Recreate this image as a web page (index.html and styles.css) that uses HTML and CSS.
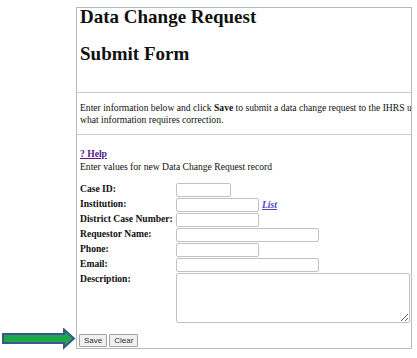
FILE: index.html
```html
<!DOCTYPE html>
<html lang="en">
<head>
  <meta charset="UTF-8">
  <title>Data Change Request</title>
  <link rel="stylesheet" href="styles.css">
</head>
<body>
  <svg class="pointer" width="80" height="22" viewBox="0 0 80 22">
    <polygon points="3,6 64,6 64,1.5 74,10.5 64,19.5 64,15 3,15" fill="#1ba84b" stroke="#3a5889" stroke-width="2" stroke-linejoin="miter"/>
  </svg>

  <div class="frame">
    <div class="content">
      <h1>Data Change Request</h1>
      <h1>Submit Form</h1>
      <hr>
      <p class="intro">Enter information below and click <b>Save</b> to submit a data change request to the IHRS unit. Please describe<br>what information requires correction.</p>
      <hr>
      <a class="help" href="#">? Help</a>
      <p class="note">Enter values for new Data Change Request record</p>

      <div class="form">
        <label>Case ID:</label>
        <div><input type="text" class="w-s"></div>
        <label>Institution:</label>
        <div><input type="text" class="w-m"> <a class="list" href="#">List</a></div>
        <label>District Case Number:</label>
        <div><input type="text" class="w-m"></div>
        <label>Requestor Name:</label>
        <div><input type="text" class="w-l"></div>
        <label>Phone:</label>
        <div><input type="text" class="w-m"></div>
        <label>Email:</label>
        <div><input type="text" class="w-l"></div>
        <label>Description:</label>
        <div><textarea></textarea></div>
      </div>

      <div class="buttons">
        <button>Save</button>
        <button>Clear</button>
      </div>
    </div>
  </div>
</body>
</html>
```

FILE: styles.css
```css
body {
  margin: 0;
  background: #fff;
  color: #111;
  font-family: "Liberation Serif", "Times New Roman", serif;
  font-size: 9.6px;
  line-height: 12px;
}

.pointer {
  position: absolute;
  left: 0;
  top: 328px;
}

.frame {
  margin: 7px 0 0 76px;
  width: 334px;
  height: 340px;
  border: 1px solid #b3bbcb;
  overflow: hidden;
}

.content {
  width: 480px;
  padding-left: 3px;
}

h1 {
  margin: 0 0 19px;
  font-size: 19px;
  line-height: 18px;
  font-weight: bold;
}

hr {
  margin: 0;
  margin-left: -3px;
  border: 0;
  border-top: 1px solid #c6cad2;
}

h1 + h1 + hr {
  margin-top: 29px;
}

.intro {
  margin: 9px 0 8px;
}

.help {
  display: block;
  margin-top: 13px;
  color: #551a8b;
  font-weight: bold;
}

.note {
  margin: 1px 0 10px;
}

.form {
  display: grid;
  grid-template-columns: 96px auto;
  grid-auto-rows: 15px;
}

.form label {
  font-weight: bold;
}

.form div {
  display: flex;
  align-items: flex-start;
  gap: 3px;
}

input {
  box-sizing: border-box;
  height: 14px;
  margin: 0;
  padding: 0 2px;
  border: 1px solid #c2c2c2;
  border-radius: 2px;
  background: #fff;
}

.w-s { width: 55px; }
.w-m { width: 83px; }
.w-l { width: 143px; }

.list {
  color: #4a45c8;
  font-style: italic;
  font-weight: bold;
  line-height: 13px;
}

textarea {
  box-sizing: border-box;
  width: 234px;
  height: 50px;
  margin: 0;
  border: 1px solid #c2c2c2;
  border-radius: 2px;
  resize: both;
}

.form div:last-child {
  height: 50px;
}

.buttons {
  display: flex;
  gap: 2px;
  margin-top: 46px;
  margin-left: -1px;
}

button {
  height: 13px;
  padding: 0 4px;
  border: 1px solid #a3a3a3;
  border-radius: 1px;
  background: #f0f0f0;
  color: #333;
  font-family: "Liberation Sans", Arial, sans-serif;
  font-size: 8px;
  line-height: 11px;
}
```
